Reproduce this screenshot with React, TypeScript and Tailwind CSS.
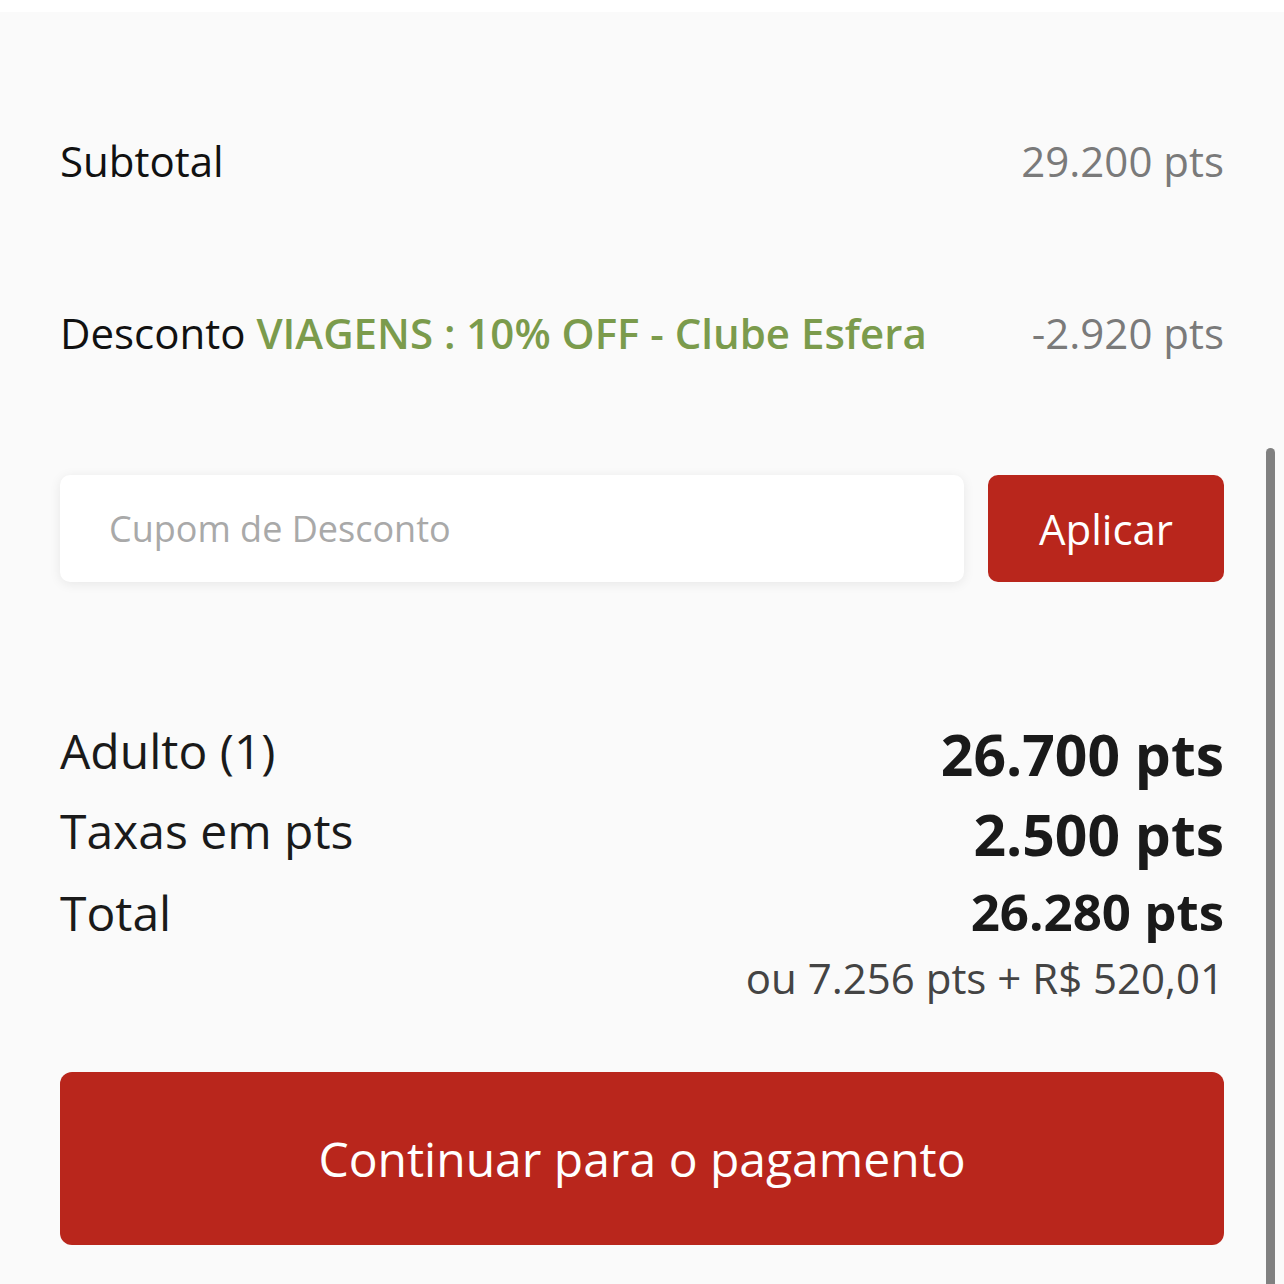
import React from "react";

export default function App() {
  return (
    <div
      className="relative w-[1284px] h-[1284px] overflow-hidden bg-[#fafafa]"
      style={{ fontFamily: '"Open Sans", "Noto Sans", sans-serif' }}
    >
      <div className="h-[12px] bg-white" />
      <div className="pl-[60px] pr-[60px]">
        <div className="mt-[120px] flex justify-between items-baseline text-[42px] leading-[57px]">
          <span className="text-[#111111]">Subtotal</span>
          <span className="text-[#7a7a7a]">29.200 pts</span>
        </div>
        <div className="mt-[115px] flex justify-between items-baseline text-[42px] leading-[57px]">
          <span className="text-[#111111]">
            Desconto{" "}
            <span className="font-semibold text-[#7b9b4c]">
              VIAGENS : 10% OFF - Clube Esfera
            </span>
          </span>
          <span className="text-[#7a7a7a]">-2.920 pts</span>
        </div>
        <div className="mt-[114px] flex gap-[24px] h-[107px]">
          <div className="flex-1 flex items-center bg-white rounded-[10px] shadow-[0_2px_12px_rgba(0,0,0,0.08)] pl-[49px]">
            <span className="text-[36px] text-[#a9a9a9]">Cupom de Desconto</span>
          </div>
          <button className="w-[236px] flex items-center justify-center bg-[#b9261c] rounded-[10px] text-white text-[42px]">
            Aplicar
          </button>
        </div>
        <div className="mt-[136px] flex justify-between items-start">
          <span className="text-[48px] leading-[65px] text-[#1a1a1a]">Adulto (1)</span>
          <span className="text-[57px] leading-[73px] font-bold text-[#1a1a1a]">26.700 pts</span>
        </div>
        <div className="mt-[7px] flex justify-between items-start">
          <span className="text-[48px] leading-[65px] text-[#1a1a1a]">Taxas em pts</span>
          <span className="text-[57px] leading-[73px] font-bold text-[#1a1a1a]">2.500 pts</span>
        </div>
        <div className="mt-[8px] flex justify-between items-baseline">
          <span className="text-[48px] leading-[65px] text-[#1a1a1a]">Total</span>
          <span className="text-[51px] leading-[65px] font-bold text-[#1a1a1a]">26.280 pts</span>
        </div>
        <div className="mt-[4px] flex justify-end text-[42px] leading-[57px] text-[#444444]">
          ou 7.256 pts + R$ 520,01
        </div>
        <button className="mt-[66px] w-full h-[173px] flex items-center justify-center bg-[#b9261c] rounded-[12px] text-white text-[48px]">
          Continuar para o pagamento
        </button>
      </div>
      <div className="absolute left-[1266px] top-[448px] w-[9px] h-[900px] rounded-t-full bg-[#808080]" />
    </div>
  );
}
